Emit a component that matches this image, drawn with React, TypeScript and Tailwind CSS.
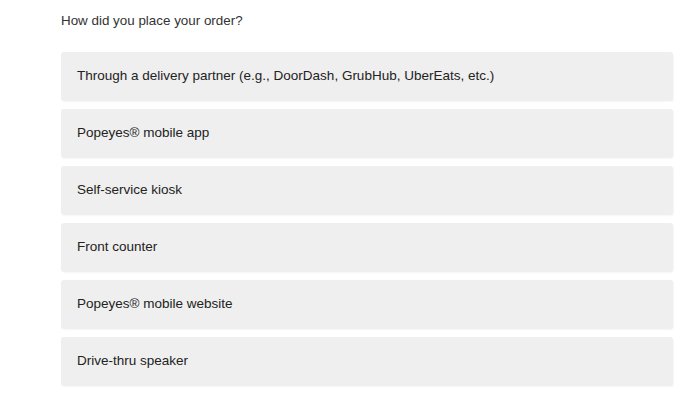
import React from "react";

const options = [
  "Through a delivery partner (e.g., DoorDash, GrubHub, UberEats, etc.)",
  "Popeyes® mobile app",
  "Self-service kiosk",
  "Front counter",
  "Popeyes® mobile website",
  "Drive-thru speaker",
];

export default function App() {
  return (
    <div className="w-[700px] h-[400px] bg-white overflow-hidden [font-family:'Liberation_Sans',Arial,sans-serif] text-[#222]">
      <div className="pl-[61px] pr-[27px] pt-[12px]">
        <div className="text-[13.4px] leading-[17px] text-[#333]">How did you place your order?</div>
        <div className="mt-[23px] flex flex-col gap-[8px]">
          {options.map((o) => (
            <div
              key={o}
              className="h-[49px] rounded-[3px] bg-[#efefef] flex items-center pl-[16px] text-[13.5px] text-[#222] shadow-[1px_1px_2px_rgba(0,0,0,0.04)]"
            >
              {o}
            </div>
          ))}
        </div>
      </div>
    </div>
  );
}
